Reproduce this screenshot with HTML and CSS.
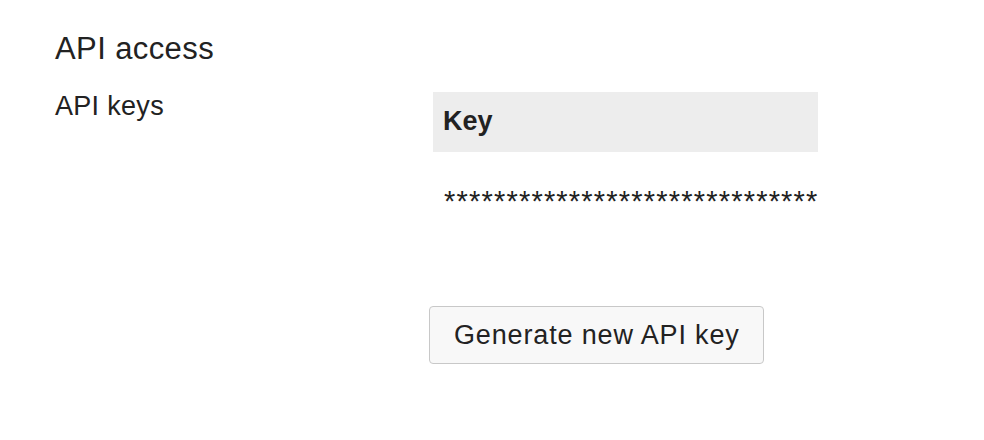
FILE: index.html
```html
<!DOCTYPE html>
<html lang="en">
<head>
<meta charset="utf-8">
<title>API access</title>
<link rel="stylesheet" href="styles.css">
</head>
<body>
<div class="page">
  <h2 class="title">API access</h2>
  <div class="row">
    <div class="label">API keys</div>
    <div class="content">
      <div class="table-wrap">
        <table class="keys">
          <thead>
            <tr><th>Key</th></tr>
          </thead>
          <tbody>
            <tr><td class="masked">****************************************</td></tr>
          </tbody>
        </table>
      </div>
      <button class="btn" type="button">Generate new API key</button>
    </div>
  </div>
</div>
</body>
</html>
```

FILE: styles.css
```css
html, body {
  margin: 0;
  padding: 0;
  background: #ffffff;
}

body {
  font-family: "Liberation Sans", Arial, Helvetica, sans-serif;
  color: #222222;
  font-size: 27px;
  line-height: 32px;
}

.page {
  padding: 31px 0 0 55px;
}

.title {
  margin: 0 0 23px 0;
  font-size: 31px;
  line-height: 36px;
  font-weight: normal;
  letter-spacing: 0.4px;
}

.row {
  display: flex;
  align-items: flex-start;
}

.label {
  width: 378px;
  flex: none;
  letter-spacing: 0.3px;
}

.content {
  display: flex;
  flex-direction: column;
  align-items: flex-start;
  padding-top: 2px;
}

.table-wrap {
  width: 385px;
  overflow: hidden;
}

.keys {
  border-collapse: collapse;
  width: 100%;
  table-layout: fixed;
}

.keys th {
  background: #ededed;
  text-align: left;
  font-weight: bold;
  padding: 13px 10px 15px 10px;
}

.keys td {
  padding: 33px 11px 33px 11px;
  white-space: nowrap;
  overflow: hidden;
}

.masked {
  font-size: 29px;
  letter-spacing: 1.2px;
}

.btn {
  margin: 56px 0 0 -4px;
  font-family: "Liberation Sans", Arial, Helvetica, sans-serif;
  font-size: 27px;
  line-height: 32px;
  letter-spacing: 0.85px;
  color: #222222;
  background: #f8f8f8;
  border: 1px solid #c8c8c8;
  border-radius: 4px;
  padding: 12px 23px 12px 24px;
  cursor: pointer;
}
```
